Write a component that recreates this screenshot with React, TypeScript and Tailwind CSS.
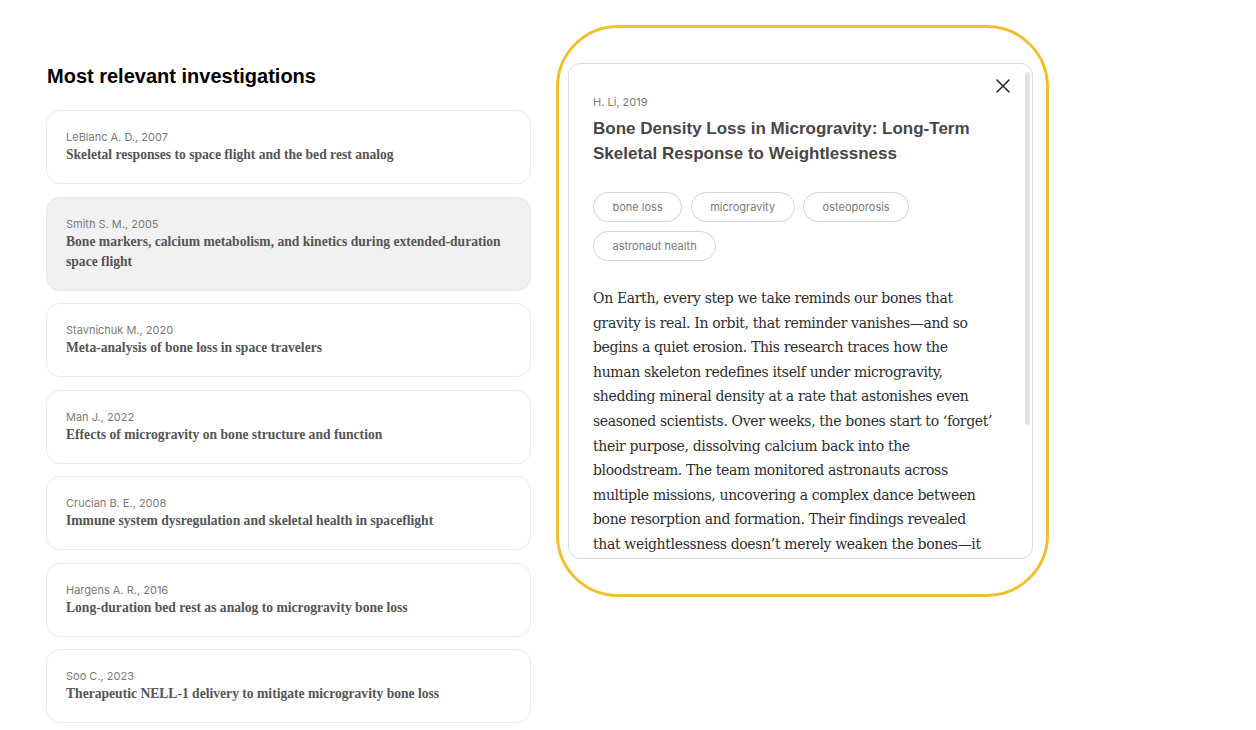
import React from "react";

const items = [
  { a: "LeBlanc A. D., 2007", t: "Skeletal responses to space flight and the bed rest analog" },
  { a: "Smith S. M., 2005", t: "Bone markers, calcium metabolism, and kinetics during extended-duration space flight", active: true },
  { a: "Stavnichuk M., 2020", t: "Meta-analysis of bone loss in space travelers" },
  { a: "Man J., 2022", t: "Effects of microgravity on bone structure and function" },
  { a: "Crucian B. E., 2008", t: "Immune system dysregulation and skeletal health in spaceflight" },
  { a: "Hargens A. R., 2016", t: "Long-duration bed rest as analog to microgravity bone loss" },
  { a: "Soo C., 2023", t: "Therapeutic NELL-1 delivery to mitigate microgravity bone loss" },
];

const tags = ["bone loss", "microgravity", "osteoporosis", "astronaut health"];

const lines = [
  "On Earth, every step we take reminds our bones that",
  "gravity is real. In orbit, that reminder vanishes—and so",
  "begins a quiet erosion. This research traces how the",
  "human skeleton redefines itself under microgravity,",
  "shedding mineral density at a rate that astonishes even",
  "seasoned scientists. Over weeks, the bones start to ‘forget’",
  "their purpose, dissolving calcium back into the",
  "bloodstream. The team monitored astronauts across",
  "multiple missions, uncovering a complex dance between",
  "bone resorption and formation. Their findings revealed",
  "that weightlessness doesn’t merely weaken the bones—it",
];

const sans = "font-['Inter','Liberation_Sans',sans-serif]";
const serif = "font-['Liberation_Serif','DejaVu_Serif',serif]";

export default function App() {
  return (
    <div className="w-[1256px] h-[730px] bg-white overflow-hidden">
      <div className="flex items-start pl-[46px] pt-[25px]">
        <div className="w-[485px] flex flex-col">
          <h2 className="mt-[38px] mb-[21px] pl-px text-[20px] leading-[26px] font-bold text-black font-['Liberation_Sans','Arial',sans-serif]">
            Most relevant investigations
          </h2>
          <div className="flex flex-col gap-[12.5px]">
            {items.map((it) => (
              <div
                key={it.a}
                className={`rounded-[14px] border px-[19px] pt-[18px] pb-[18px] ${
                  it.active ? "bg-[#f1f1f1] border-[#e6e6e6]" : "bg-white border-[#ececec]"
                }`}
              >
                <div className={`${sans} text-[11px] leading-[16px] text-[#7a7a7a]`}>{it.a}</div>
                <div className={`${serif} text-[13.6px] leading-[20px] font-bold text-[#555]`}>{it.t}</div>
              </div>
            ))}
          </div>
        </div>
        <div className="ml-[25px] w-[493px] h-[572px] border-[3px] border-[#f0c030] rounded-[62px] pt-[35px] pb-[35px] pl-[9px] pr-[13px] flex">
          <div className="relative flex-1 rounded-[12px] border border-[#dcdcdc] overflow-hidden bg-white">
            <div className="absolute right-[2px] top-[8px] w-[5px] h-[353px] rounded-full bg-[#e3e4e8]" />
            <button className="absolute top-[14px] right-[21px] w-[16px] h-[16px] flex items-center justify-center text-[#222]">
              <svg width="14" height="14" viewBox="0 0 14 14" fill="none" stroke="currentColor" strokeWidth="1.5" strokeLinecap="round">
                <path d="M1 1L13 13M13 1L1 13" />
              </svg>
            </button>
            <div className="pl-[24px] pr-[30px] pt-[30px]">
              <div className={`${sans} text-[11px] leading-[16px] text-[#7a7a7a]`}>H. Li, 2019</div>
              <h3 className="mt-[6px] w-[400px] text-[17px] leading-[25px] font-bold text-[#474747] font-['Liberation_Sans','Arial',sans-serif]">
                Bone Density Loss in Microgravity: Long-Term Skeletal Response to Weightlessness
              </h3>
              <div className="mt-[26px] flex flex-wrap gap-x-[8.5px] gap-y-[9px] w-[360px]">
                {tags.map((t) => (
                  <span
                    key={t}
                    className={`${sans} h-[30px] px-[18.5px] rounded-full border border-[#d4d4d4] text-[11px] text-[#7a7a7a] flex items-center`}
                  >
                    {t}
                  </span>
                ))}
              </div>
              <div className="mt-[25px] font-['DejaVu_Serif','Liberation_Serif',serif] text-[14px] tracking-[-0.35px] leading-[24.6px] text-[#2e2e2e]">
                {lines.map((l) => (
                  <div key={l} className="whitespace-nowrap">
                    {l}
                  </div>
                ))}
              </div>
            </div>
          </div>
        </div>
      </div>
    </div>
  );
}
